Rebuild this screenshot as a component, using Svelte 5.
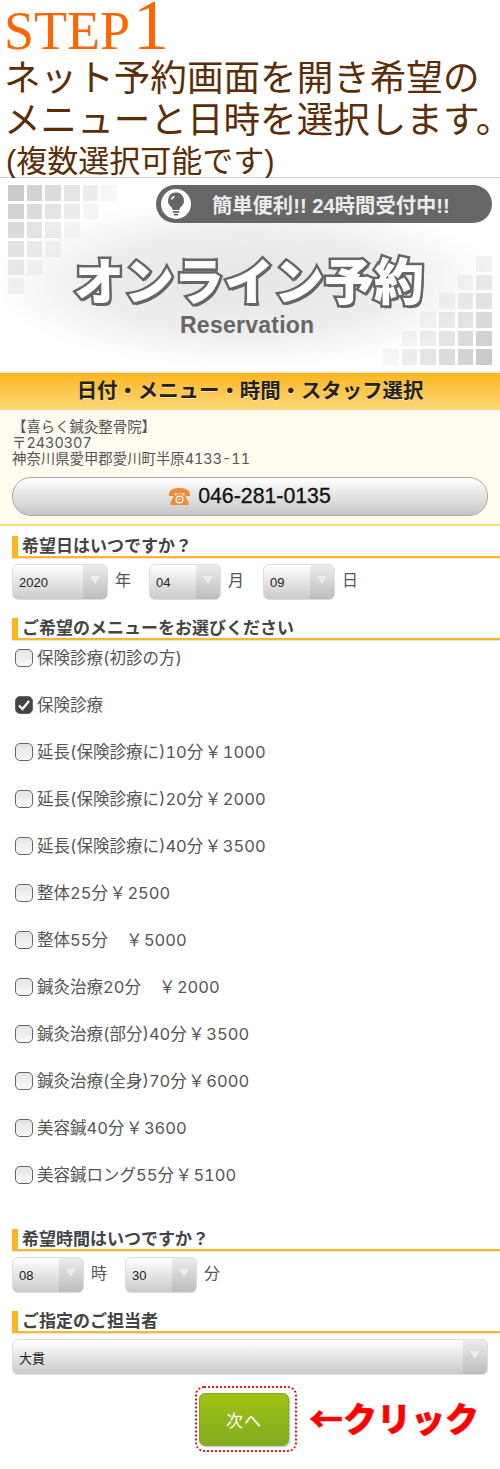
<script>
  const menus = [
    '保険診療(初診の方)', '保険診療', '延長(保険診療に)10分￥1000', '延長(保険診療に)20分￥2000',
    '延長(保険診療に)40分￥3500', '整体25分￥2500', '整体55分　￥5000', '鍼灸治療20分　￥2000',
    '鍼灸治療(部分)40分￥3500', '鍼灸治療(全身)70分￥6000', '美容鍼40分￥3600', '美容鍼ロング55分￥5100'
  ]
  const squares = []
  for (let row = 0; row < 6; row++) {
    for (let col = 0; col < 6 - row; col++) {
      squares.push({ row, col, o: Math.max(.1, .78 - col * .13 - row * .12) })
    }
  }
</script>

<main>
  <header class="step">
    <h1><span>STEP</span><b>1</b></h1>
    <p class="lead">ネット予約画面を開き希望の</p>
    <p class="lead">メニューと日時を選択します。</p>
    <p class="lead sub">(複数選択可能です)</p>
  </header>

  <section class="banner">
    <div class="tiles left">
      {#each squares as s}
        <i style="grid-area:{s.row + 1}/{s.col + 1};opacity:{s.o}"></i>
      {/each}
    </div>
    <div class="tiles right">
      {#each squares as s}
        <i style="grid-area:{6 - s.row}/{6 - s.col};opacity:{s.o}"></i>
      {/each}
    </div>
    <div class="pill">
      <svg viewBox="0 0 30 30" width="30" height="30">
        <circle cx="15" cy="15" r="15" fill="#fff"/>
        <path d="M15 3.500a8 8 0 0 0-5 14.200c1 .9 1.400 2 1.500 3.300h7c.1-1.300.5-2.400 1.500-3.300A8 8 0 0 0 15 3.500z" fill="#666"/>
        <path d="M11.800 22h6.400v1.800h-6.400zM12.800 24.800h4.400V26.500h-4.400z" fill="#666"/>
        <path d="M10.500 10.500a4.500 4.500 0 0 1 3-3" stroke="#fff" stroke-width="1.500" fill="none"/>
      </svg>
      <span>簡単便利!! 24時間受付中!!</span>
    </div>
    <div class="logo">オンライン予約</div>
    <div class="res">Reservation</div>
  </section>

  <h2 class="band">日付・メニュー・時間・スタッフ選択</h2>
  <section class="info">
    <p>
      【喜らく鍼灸整骨院】<br>
      〒2430307<br>
      神奈川県愛甲郡愛川町半原4133-11
    </p>
    <div class="tel">
      <svg viewBox="0 0 21 17" width="21" height="17">
        <path d="M0 6.500C0 2 4.500 0 10.500 0S21 2 21 6.500V8h-5.500V5H5.500v3H0z" fill="#ef8a38"/>
        <path d="M1.500 17v-2.500L5 7.500h2.500V5.500h6v2H16l3.500 7V17z" fill="#ef8a38"/>
        <circle cx="10.500" cy="11.500" r="3.400" fill="none" stroke="#fff" stroke-width="1.300"/>
        <circle cx="10.500" cy="11.500" r="1" fill="#fff"/>
      </svg>
      <span>046-281-0135</span>
    </div>
  </section>

  <h3 class="first">希望日はいつですか？</h3>
  <div class="row">
    <div class="sel w96"><span>2020</span><em></em></div><label class="l1">年</label>
    <div class="sel w72"><span>04</span><em></em></div><label class="l2">月</label>
    <div class="sel w72"><span>09</span><em></em></div><label>日</label>
  </div>

  <h3>ご希望のメニューをお選びください</h3>
  <ul>
    {#each menus as m, i}
      {@const parts = m.split('￥')}
      <li>
        <span class="box" class:on={i === 1}>
          {#if i === 1}
            <svg viewBox="0 0 18 18" width="18" height="18"><path d="M4 9.500l3.500 3.500L14 5" fill="none" stroke="#fff" stroke-width="2.200"/></svg>
          {/if}
        </span>
        <span>{parts[0]}{#if parts[1]}<span class="yen">￥</span>{parts[1]}{/if}</span>
      </li>
    {/each}
  </ul>

  <h3 class="time">希望時間はいつですか？</h3>
  <div class="row">
    <div class="sel w72"><span>08</span><em></em></div><label class="l3">時</label>
    <div class="sel w72"><span>30</span><em></em></div><label>分</label>
  </div>

  <h3>ご指定のご担当者</h3>
  <div class="row">
    <div class="sel full"><span>大貫</span><em></em></div>
  </div>

  <div class="next">
    <div class="dots"><button>次へ</button></div>
    <strong>←クリック</strong>
  </div>
</main>

<style>
  :global(body) {
    margin: 0;
    background: #fff;
  }
  main {
    width: 500px;
    height: 1469px;
    overflow: hidden;
    font-family: "Liberation Sans", "Noto Sans CJK JP", sans-serif;
    color: #555;
  }
  p, h1, h2, h3, ul {
    margin: 0;
    padding: 0;
  }

  .step {
    height: 177px;
    padding-left: 4px;
    border-bottom: 1px solid #ccc;
  }
  h1 {
    height: 55px;
    font-family: "Liberation Serif", serif;
    font-weight: 400;
    color: #ff6600;
    font-size: 54px;
    line-height: 60px;
    white-space: nowrap;
  }
  h1 b {
    font-weight: 400;
    font-size: 72px;
    line-height: 50px;
    margin-left: 3px;
  }
  .lead {
    font-family: "Noto Sans CJK JP", sans-serif;
    font-size: 36.600px;
    line-height: 42px;
    color: #5c2e08;
    white-space: nowrap;
  }
  .lead.sub {
    margin: 7px 0 0 2px;
    font-size: 31px;
    line-height: 31px;
    font-family: "Liberation Sans", "Noto Sans CJK JP", sans-serif;
  }

  .banner {
    position: relative;
    height: 190px;
    background: radial-gradient(ellipse 255px 85px at 245px 105px, #e6e6e6 0%, #eeeeee 60%, #fff 100%);
    overflow: hidden;
  }
  .tiles {
    position: absolute;
    display: grid;
    grid-template-columns: repeat(6, 15.700px);
    grid-template-rows: repeat(6, 15.700px);
    gap: 3px;
  }
  .tiles i {
    background: #bbb;
  }
  .tiles.left { left: 8px; top: 7px; }
  .tiles.right { right: 8px; top: 78px; }
  .pill {
    position: absolute;
    left: 156px;
    top: 7px;
    width: 336px;
    height: 38px;
    border-radius: 19px;
    background: #666;
    display: flex;
    align-items: center;
    padding-left: 5px;
    box-sizing: border-box;
    color: #ececec;
    font-weight: 700;
    font-size: 20.300px;
    white-space: nowrap;
  }
  .pill span {
    margin-left: 21px;
  }
  .logo {
    position: absolute;
    left: 74px;
    top: 65px;
    font-family: "Noto Sans CJK JP", sans-serif;
    font-weight: 900;
    font-size: 50px;
    line-height: 70px;
    color: #fff;
    white-space: nowrap;
    -webkit-text-stroke: 5px #666;
    paint-order: stroke fill;
    text-shadow: 1px 1px 0 #666, 2px 2px 0 #666, 2px 3px 0 #666;
  }
  .res {
    position: absolute;
    left: 180px;
    top: 134px;
    font-size: 23px;
    line-height: 26px;
    font-weight: 700;
    letter-spacing: .25px;
    color: #666;
  }

  .band {
    margin-top: 5px;
    height: 37px;
    line-height: 36px;
    text-align: center;
    font-size: 20.400px;
    font-weight: 700;
    color: #222;
    background: linear-gradient(#fdb61d, #fdd77c);
    box-shadow: 0 0 3px rgba(0, 0, 0, .25);
    text-shadow: 0 1px 0 rgba(255, 255, 255, .5);
  }
  .info {
    height: 105px;
    padding: 9px 12px 0;
    background: #fffbee;
    border-bottom: 2px solid #ffd77f;
  }
  .info p {
    font-family: Inter, "Noto Sans CJK JP", sans-serif;
    font-variant-numeric: tabular-nums;
    font-size: 14.400px;
    line-height: 16px;
    color: #555;
    white-space: nowrap;
  }
  .tel {
    margin-top: 10px;
    height: 37px;
    border: 1px solid #aaa;
    border-radius: 19px;
    background: linear-gradient(#fff, #c6c6c6);
    display: flex;
    align-items: center;
    justify-content: center;
    gap: 8px;
    font-size: 21.300px;
    color: #111;
    -webkit-text-stroke: .3px #111;
  }

  h3 {
    margin: 18px 0 6px 12px;
    height: 20px;
    padding-left: 4px;
    border-left: 6px solid #fdb61d;
    border-bottom: 2px solid #fbb727;
    box-shadow: 0 1px 0 #e4e4e4;
    font-size: 17px;
    line-height: 21px;
    color: #444;
    font-weight: 700;
    white-space: nowrap;
  }
  h3.first {
    margin-top: 10px;
  }
  h3.time {
    margin-top: 11px;
  }

  .row {
    display: flex;
    align-items: flex-start;
    padding: 0 12px;
    height: 36px;
  }
  .row label {
    font-size: 16px;
    line-height: 34px;
    margin-left: 7px;
    color: #555;
  }
  .row label.l1 { width: 34px; }
  .row label.l2 { width: 35px; }
  .row label.l3 { width: 34px; }
  .sel {
    box-sizing: border-box;
    height: 36px;
    border: 1px solid #ddd;
    border-radius: 6px;
    background: linear-gradient(#fff, #cbcbcb);
    display: flex;
    align-items: center;
    justify-content: space-between;
    font-size: 13px;
    color: #222;
    overflow: hidden;
  }
  .sel span {
    padding-left: 6px;
    padding-top: 1px;
  }
  .sel em {
    width: 24px;
    height: 100%;
    background: rgba(0, 0, 0, .07);
    display: flex;
    align-items: center;
    justify-content: center;
  }
  .sel em::after {
    content: "";
    border-left: 5px solid transparent;
    border-right: 5px solid transparent;
    border-top: 8px solid #ececec;
    margin-top: -4px;
  }
  .w96 { width: 96px; }
  .w72 { width: 72px; }
  .full { width: 476px; }

  ul {
    list-style: none;
    height: 573px;
    margin-top: -1px;
  }
  li {
    height: 47px;
    display: flex;
    align-items: flex-start;
    padding-left: 15px;
    font-family: Inter, "Noto Sans CJK JP", sans-serif;
    font-variant-numeric: tabular-nums;
    font-size: 16.500px;
    line-height: 26px;
    color: #555;
    white-space: nowrap;
  }
  .yen {
    margin: 0 1.500px;
  }
  .box {
    box-sizing: border-box;
    width: 18px;
    height: 18px;
    margin: 4px 4px 0 0;
    flex: none;
    border: 1px solid #666;
    border-radius: 5px;
    background: linear-gradient(#e4e4e4, #fafafa);
    position: relative;
  }
  .box.on {
    background: #444;
  }
  .box svg {
    position: absolute;
    left: -1px;
    top: -1px;
  }

  .next {
    display: flex;
    align-items: flex-start;
    margin: 11px 0 0 195px;
  }
  .dots {
    box-sizing: border-box;
    width: 102px;
    height: 66px;
    padding: 5px 0 0 2px;
    border: 2.500px dotted #f01018;
    border-radius: 9px;
  }
  button {
    display: block;
    width: 90px;
    height: 53px;
    border: 1px solid #84a81f;
    border-radius: 6px;
    background: linear-gradient(#9cc312, #84ab20);
    box-shadow: 1px 1px 2px rgba(0, 0, 0, .25);
    color: #fff;
    font-family: inherit;
    font-size: 17px;
    letter-spacing: 1px;
  }
  strong {
    margin: 7px 0 0 12px;
    font-size: 34px;
    line-height: 50px;
    font-weight: 900;
    color: #f00;
    white-space: nowrap;
    font-family: "Noto Sans CJK JP", sans-serif;
    -webkit-text-stroke: .5px #f00;
  }
</style>
